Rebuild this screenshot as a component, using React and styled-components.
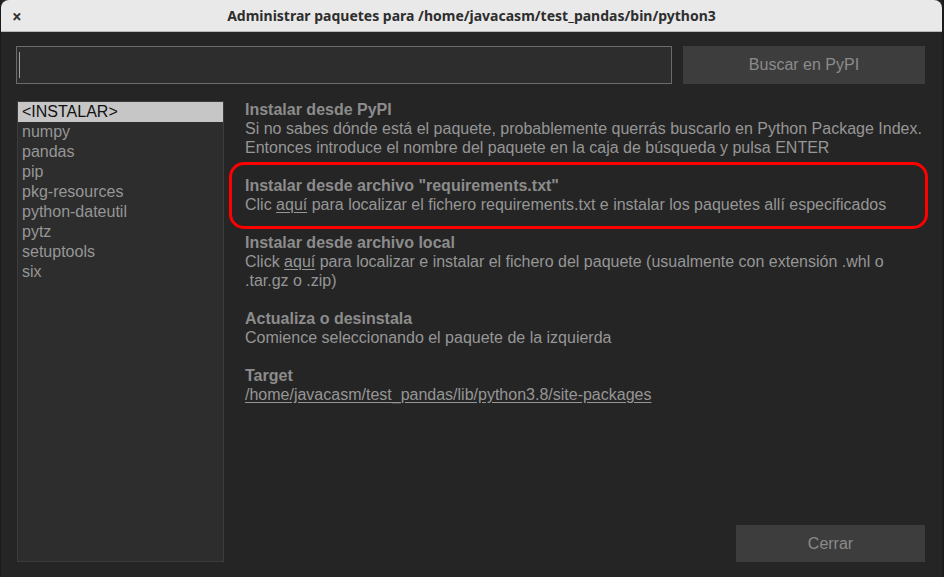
import styled, { createGlobalStyle } from 'styled-components';

const Global = createGlobalStyle`
  html, body {
    margin: 0;
    background: #252525;
    overflow: hidden;
  }
  * { box-sizing: border-box; }
`;

const packages = ['<INSTALAR>', 'numpy', 'pandas', 'pip', 'pkg-resources', 'python-dateutil', 'pytz', 'setuptools', 'six'];

const Window = styled.div`
  width: 944px;
  height: 577px;
  display: flex;
  flex-direction: column;
  background: #252525;
  border-left: 1px solid #1b1b1b;
  border-right: 2px solid #1b1b1b;
  font-family: 'Liberation Sans', Arial, sans-serif;
`;

const TitleBar = styled.div`
  height: 32px;
  flex: none;
  position: relative;
  display: flex;
  align-items: center;
  justify-content: center;
  background: #e9e9e9;
  border-bottom: 1px solid #b8b8b8;
  border-radius: 8px 8px 0 0;
  color: #2e2e2e;
  font-family: 'Noto Sans', sans-serif;
  font-weight: 700;
  font-size: 14px;
`;

const CloseGlyph = styled.span`
  position: absolute;
  left: 11px;
  top: 5px;
  font-size: 17px;
  font-weight: 700;
  color: #333;
`;

const Body = styled.div`
  flex: 1;
  display: flex;
  flex-direction: column;
  padding: 14px 17px 15px 15px;
`;

const SearchRow = styled.div`
  display: flex;
  gap: 11px;
  height: 38px;
`;

const SearchInput = styled.div`
  flex: 1;
  background: #2d2d2d;
  border: 1px solid #6b6b6b;
  display: flex;
  align-items: center;
  padding-left: 2px;
`;

const Caret = styled.span`
  width: 1px;
  height: 26px;
  background: #a0a0a0;
`;

const Button = styled.div`
  width: ${p => p.$w}px;
  height: ${p => p.$h}px;
  background: #3d3d3d;
  color: #8b8b8b;
  font-size: 16px;
  display: flex;
  align-items: center;
  justify-content: center;
`;

const Main = styled.div`
  flex: 1;
  display: flex;
  margin-top: 17px;
`;

const List = styled.div`
  width: 207px;
  margin-left: 1px;
  background: #2d2d2d;
  border: 1px solid #3c3c3c;
`;

const Item = styled.div`
  height: 20px;
  line-height: 20px;
  padding-left: 4px;
  font-size: 16px;
  color: ${p => (p.$selected ? '#111' : '#969696')};
  background: ${p => (p.$selected ? '#c6c6c6' : 'transparent')};
`;

const Info = styled.div`
  flex: 1;
  display: flex;
  flex-direction: column;
  padding-left: 21px;
  position: relative;
`;

const Section = styled.div`
  font-size: 16px;
  line-height: 19px;
  color: #969696;
  margin-bottom: 19px;
  &:first-child { margin-top: -1px; }
`;

const Heading = styled.div`
  font-weight: 700;
  color: #8c8c8c;
`;

const Link = styled.span`
  text-decoration: underline;
  text-underline-offset: 2px;
`;

const Highlight = styled.div`
  position: absolute;
  left: 5px;
  top: 61px;
  width: 699px;
  height: 67px;
  border: 3px solid #ff0000;
  border-radius: 15px;
  pointer-events: none;
`;

const Footer = styled.div`
  margin-top: auto;
  display: flex;
  justify-content: flex-end;
`;

export default function App() {
  return (
    <>
      <Global />
      <Window>
        <TitleBar>
          <CloseGlyph>×</CloseGlyph>
          Administrar paquetes para /home/javacasm/test_pandas/bin/python3
        </TitleBar>
        <Body>
          <SearchRow>
            <SearchInput><Caret /></SearchInput>
            <Button $w={242} $h={38}>Buscar en PyPI</Button>
          </SearchRow>
          <Main>
            <List>
              {packages.map((p, i) => (
                <Item key={p} $selected={i === 0}>{p}</Item>
              ))}
            </List>
            <Info>
              <Section>
                <Heading>Instalar desde PyPI</Heading>
                Si no sabes dónde está el paquete, probablemente querrás buscarlo en Python Package Index.<br />
                Entonces introduce el nombre del paquete en la caja de búsqueda y pulsa ENTER
              </Section>
              <Section>
                <Heading>Instalar desde archivo "requirements.txt"</Heading>
                Clic <Link>aquí</Link> para localizar el fichero requirements.txt e instalar los paquetes allí especificados
              </Section>
              <Section>
                <Heading>Instalar desde archivo local</Heading>
                Click <Link>aquí</Link> para localizar e instalar el fichero del paquete (usualmente con extensión .whl o<br />
                .tar.gz o .zip)
              </Section>
              <Section>
                <Heading>Actualiza o desinstala</Heading>
                Comience seleccionando el paquete de la izquierda
              </Section>
              <Section>
                <Heading>Target</Heading>
                <Link>/home/javacasm/test_pandas/lib/python3.8/site-packages</Link>
              </Section>
              <Highlight />
              <Footer>
                <Button $w={189} $h={37}>Cerrar</Button>
              </Footer>
            </Info>
          </Main>
        </Body>
      </Window>
    </>
  );
}
